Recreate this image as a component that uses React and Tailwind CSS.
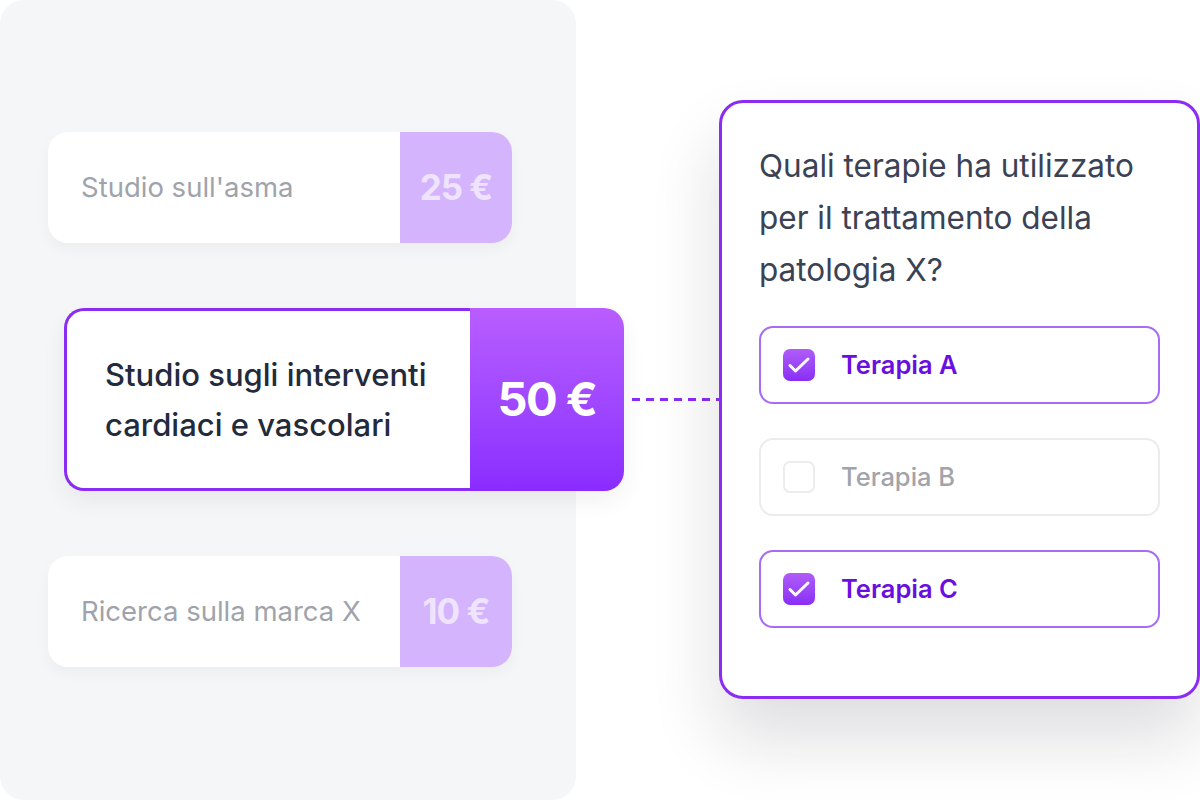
import React from "react";

function Check() {
  return (
    <svg width="32" height="32" viewBox="0 0 32 32" fill="none">
      <path d="M7 16.5l5.5 5.5L25 10" stroke="white" strokeWidth="3" strokeLinecap="round" strokeLinejoin="round" />
    </svg>
  );
}

function Option({ label, checked }) {
  return (
    <div
      className={
        "flex items-center h-[78px] rounded-[14px] border-2 pl-[22px] " +
        (checked ? "border-[#a66cf6]" : "border-[#ececee]")
      }
    >
      {checked ? (
        <div className="w-[32px] h-[32px] rounded-[7px] bg-gradient-to-b from-[#b05cf9] to-[#8a2cf6] flex items-center justify-center">
          <Check />
        </div>
      ) : (
        <div className="w-[32px] h-[32px] rounded-[7px] border-2 border-[#ececee]" />
      )}
      <span
        className={
          "ml-[26px] text-[25.5px] " +
          (checked ? "text-[#6a0fe2] font-semibold" : "text-[#a1a4ab] font-medium")
        }
      >
        {label}
      </span>
    </div>
  );
}

function SmallCard({ label, price }) {
  return (
    <div className="flex h-[111px] w-[464px] ml-[48px] rounded-[20px] overflow-hidden bg-white shadow-[0_6px_14px_rgba(0,0,0,0.04)]">
      <div className="flex-1 flex items-center pl-[33px] text-[27.5px] text-[#9fa3ab]">{label}</div>
      <div className="w-[112px] bg-[#d4b5fd] flex items-center justify-center text-[35px] font-bold tracking-[-1px] text-[#efe3fe]">
        {price}
      </div>
    </div>
  );
}

export default function App() {
  return (
    <div
      className="w-[1200px] h-[800px] bg-white flex overflow-hidden"
      style={{ fontFamily: "Inter, 'Noto Sans', sans-serif" }}
    >
      <div className="w-[576px] h-[800px] shrink-0 bg-[#f5f6f8] rounded-[24px] pt-[132px] flex flex-col gap-[65px]">
        <SmallCard label="Studio sull'asma" price="25 €" />
        <div className="flex items-center ml-[64px] relative z-10">
          <div className="flex h-[183px] w-[560px] shrink-0 rounded-[20px] shadow-[0_10px_24px_rgba(0,0,0,0.06)]">
            <div className="flex-1 bg-white border-[3px] border-r-0 border-[#8b2cf5] rounded-l-[20px] flex items-center pl-[38px]">
              <div className="text-[31px] leading-[50px] font-medium text-[#232a3b]">
                Studio sugli interventi
                <br />
                cardiaci e vascolari
              </div>
            </div>
            <div className="w-[154px] rounded-r-[20px] bg-gradient-to-b from-[#b95dff] to-[#8a2bff] flex items-center justify-center text-[47px] font-bold tracking-[-1.5px] text-white">
              50 €
            </div>
          </div>
          <div className="ml-[8px] w-[88px] h-[3px] shrink-0 bg-[repeating-linear-gradient(90deg,#8b2cf5_0px,#8b2cf5_8px,transparent_8px,transparent_14px)]" />
        </div>
        <SmallCard label="Ricerca sulla marca X" price="10 €" />
      </div>
      <div className="ml-[143px] mt-[100px] w-[481px] h-[599px] shrink-0 bg-white border-[3px] border-[#8b2cf5] rounded-[24px] shadow-[0_40px_70px_rgba(20,20,40,0.14)] pt-[37px] pl-[37px] pr-[37px] relative z-20">
        <div className="text-[31.5px] leading-[52px] text-[#3a4254] font-normal">
          Quali terapie ha utilizzato
          <br />
          per il trattamento della
          <br />
          patologia X?
        </div>
        <div className="mt-[30px] flex flex-col gap-[34px]">
          <Option label="Terapia A" checked />
          <Option label="Terapia B" checked={false} />
          <Option label="Terapia C" checked />
        </div>
      </div>
    </div>
  );
}
